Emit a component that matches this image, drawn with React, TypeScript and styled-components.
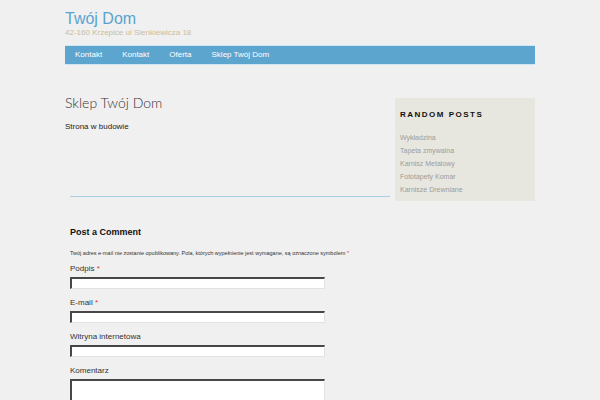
import React from 'react';
import styled, { createGlobalStyle } from 'styled-components';

const GlobalStyle = createGlobalStyle`
  html, body {
    margin: 0;
    padding: 0;
    background: #f0f0f0;
    font-family: "Liberation Sans", Arial, sans-serif;
    color: #333;
  }
`;

const Wrapper = styled.div`
  width: 470px;
  margin: 0 auto;
`;

const Header = styled.header`
  padding-top: 10px;
`;

const SiteTitle = styled.div`
  font-size: 16px;
  line-height: 18px;
  color: #5ba3cf;
`;

const SiteDescription = styled.div`
  font-size: 8px;
  line-height: 10px;
  color: #cbbc9e;
`;

const Nav = styled.nav`
  margin-top: 7px;
  display: flex;
  height: 18px;
  background: #5ca5cf;
  border-top: 1px solid #cfe5f1;
  border-bottom: 1px solid #cfe5f1;
`;

const NavItem = styled.a`
  padding: 0 10px;
  font-size: 8px;
  line-height: 18px;
  color: #fff;
  text-decoration: none;
`;

const Content = styled.div`
  display: grid;
  grid-template-columns: 330px 140px;
  align-items: start;
  padding-top: 29px;
`;

const Main = styled.main``;

const Article = styled.article`
  min-height: 102px;
`;

const EntryTitle = styled.h1`
  margin: 0;
  font-family: Lato, "Liberation Sans", sans-serif;
  font-weight: 300;
  font-size: 14px;
  line-height: 17px;
  color: #333;
`;

const EntryText = styled.p`
  margin: 10px 0 0;
  font-size: 8px;
  line-height: 12px;
  color: #222;
`;

const Divider = styled.hr`
  margin: 0 5px;
  border: 0;
  border-top: 1px solid #a9cee2;
`;

const Comments = styled.section`
  padding: 29px 5px 0;
`;

const CommentTitle = styled.h3`
  margin: 0;
  font-size: 9px;
  line-height: 12px;
  font-weight: bold;
  color: #111;
`;

const Note = styled.p`
  margin: 11px 0 5px;
  font-size: 5.5px;
  line-height: 8px;
  color: #333;
`;

const Required = styled.span`
  color: #d33;
`;

const Field = styled.div`
  margin-bottom: 7px;
`;

const Label = styled.label`
  display: block;
  font-size: 8px;
  line-height: 13px;
  margin-bottom: 2px;
  color: #333;
`;

const Input = styled.div<{ $tall?: boolean }>`
  box-sizing: border-box;
  width: 255px;
  height: ${(p) => (p.$tall ? '60px' : '12px')};
  background: #fff;
  border-top: 2px solid #474747;
  border-left: 2px solid #474747;
  border-right: 1px solid #e2e2e2;
  border-bottom: 1px solid #e2e2e2;
`;

const Sidebar = styled.aside`
  margin-top: 4px;
  background: #e7e7df;
  padding: 11px 5px 5px;
`;

const WidgetTitle = styled.h4`
  margin: 0 0 10px;
  font-size: 8px;
  line-height: 12px;
  font-weight: bold;
  letter-spacing: 1.5px;
  color: #111;
`;

const PostList = styled.ul`
  list-style: none;
  margin: 0;
  padding: 0;
`;

const PostLink = styled.li`
  font-size: 7px;
  line-height: 13px;
  color: #9c9c9c;
`;

const navItems = ['Kontakt', 'Kontakt', 'Oferta', 'Sklep Twój Dom'];
const posts = ['Wykładzina', 'Tapeta zmywalna', 'Karnisz Metalowy', 'Fototapety Komar', 'Karnisze Drewniane'];

export default function App() {
  return (
    <>
      <GlobalStyle />
      <Wrapper>
        <Header>
          <SiteTitle>Twój Dom</SiteTitle>
          <SiteDescription>42-160 Krzepice ul Sienkiewicza 18</SiteDescription>
        </Header>
        <Nav>
          {navItems.map((item, i) => (
            <NavItem key={i} href="#">
              {item}
            </NavItem>
          ))}
        </Nav>
        <Content>
          <Main>
            <Article>
              <EntryTitle>Sklep Twój Dom</EntryTitle>
              <EntryText>Strona w budowie</EntryText>
            </Article>
            <Divider />
            <Comments>
              <CommentTitle>Post a Comment</CommentTitle>
              <Note>
                Twój adres e-mail nie zostanie opublikowany. Pola, których wypełnienie jest wymagane, są oznaczone
                symbolem <Required>*</Required>
              </Note>
              <Field>
                <Label>
                  Podpis <Required>*</Required>
                </Label>
                <Input />
              </Field>
              <Field>
                <Label>
                  E-mail <Required>*</Required>
                </Label>
                <Input />
              </Field>
              <Field>
                <Label>Witryna internetowa</Label>
                <Input />
              </Field>
              <Field>
                <Label>Komentarz</Label>
                <Input $tall />
              </Field>
            </Comments>
          </Main>
          <Sidebar>
            <WidgetTitle>RANDOM POSTS</WidgetTitle>
            <PostList>
              {posts.map((p) => (
                <PostLink key={p}>{p}</PostLink>
              ))}
            </PostList>
          </Sidebar>
        </Content>
      </Wrapper>
    </>
  );
}
